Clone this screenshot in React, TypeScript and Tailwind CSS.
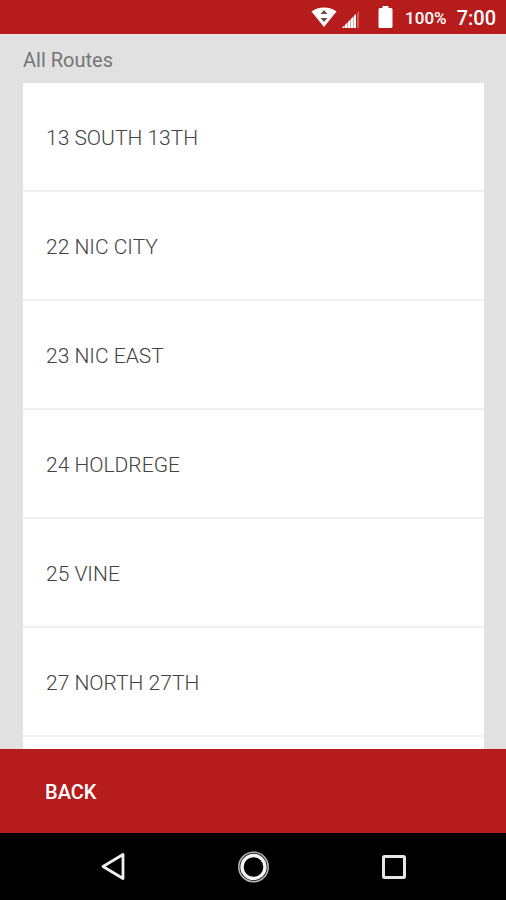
const routes = [
  "13 SOUTH 13TH",
  "22 NIC CITY",
  "23 NIC EAST",
  "24 HOLDREGE",
  "25 VINE",
  "27 NORTH 27TH",
];

function WifiIcon() {
  return (
    <svg className="w-[26px] h-5" viewBox="0 0 26 20" aria-hidden="true">
      <path d="M0.5 4.5C4 1.8 8.2 0.5 13 0.5s9 1.3 12.5 4L13 20z" fill="#fff" />
      <path d="M13 3l3.500 4h-7zM9.500 11h7L13 15z" fill="#6b4f4d" />
    </svg>
  );
}

function SignalIcon() {
  return (
    <svg className="w-[18px] h-[17px]" viewBox="0 0 18 17" aria-hidden="true">
      <path d="M0 17l2-2v2zM3 14l2-2v5H3zM6 11l2-2v8H6zM9 8l2-2v11H9zM12 5l2-2v14h-2z" fill="#fff" />
      <path d="M0 17L14 3v14z" fill="#fff" opacity="0.6" />
      <path d="M15 2l2-2v17h-2z" fill="#d05a57" />
    </svg>
  );
}

function BatteryIcon() {
  return (
    <svg className="w-[15px] h-[22px]" viewBox="0 0 15 22" aria-hidden="true">
      <path d="M4.5 0h6v2H13a1.5 1.5 0 0 1 1.500 1.500v17A1.500 1.500 0 0 1 13 22H2a1.500 1.500 0 0 1-1.500-1.500v-17A1.500 1.500 0 0 1 2 2h2.500z" fill="#fff" />
    </svg>
  );
}

function StatusBar() {
  return (
    <header className="flex h-[34px] shrink-0 items-center justify-end bg-[#b71c1c] pr-[10px] text-white">
      <WifiIcon />
      <div className="ml-[5px] pt-1">
        <SignalIcon />
      </div>
      <div className="ml-[18px]">
        <BatteryIcon />
      </div>
      <span className="ml-3 pt-0.5 text-[17px] leading-5 font-medium">100%</span>
      <span className="ml-[10px] pt-0.5 text-[20px] leading-5 font-medium">7:00</span>
    </header>
  );
}

function NavigationBar() {
  return (
    <nav className="flex h-[67px] shrink-0 items-center justify-center gap-[108px] bg-black">
      <button type="button" aria-label="Back">
        <svg className="size-8" viewBox="0 0 32 32" fill="none" stroke="#f0f0f0" strokeWidth="2.800" strokeLinejoin="round">
          <path d="M26 3.500v24L6 15.500z" />
        </svg>
      </button>
      <button type="button" aria-label="Home">
        <svg className="size-8" viewBox="0 0 32 32" fill="none">
          <circle cx="16.500" cy="16" r="14.700" stroke="#b4b4b4" strokeWidth="1.600" />
          <circle cx="16.500" cy="16" r="11.500" stroke="#f4f4f4" strokeWidth="3.400" />
        </svg>
      </button>
      <button type="button" aria-label="Recent apps">
        <svg className="size-8" viewBox="0 0 32 32" fill="none" stroke="#e6e6e6" strokeWidth="3">
          <rect x="6.500" y="5.500" width="21" height="21" rx="1" />
        </svg>
      </button>
    </nav>
  );
}

export default function App() {
  return (
    <div className="flex h-screen flex-col overflow-hidden bg-[#e1e1e1] font-['Roboto',sans-serif]">
      <StatusBar />

      <main className="flex min-h-0 flex-1 flex-col overflow-hidden pr-[22px] pl-[23px]">
        <h1 className="shrink-0 pt-[14px] pb-[11px] text-[20px] leading-6 text-[#757575]">
          All Routes
        </h1>
        <ul className="bg-white">
          {routes.map((route) => (
            <li key={route} className="border-b-2 border-[#f0f0f0]">
              <button
                type="button"
                className="block h-[107px] w-full px-[23px] pt-0.5 text-left text-[21px] leading-6 font-light text-[#424242]"
              >
                {route}
              </button>
            </li>
          ))}
          <li className="h-[107px]" />
        </ul>
      </main>

      <footer className="h-[84px] shrink-0 bg-[#b71c1c]">
        <button
          type="button"
          className="h-full w-full px-[45px] pt-0.5 text-left text-[20px] leading-6 font-medium text-white"
        >
          BACK
        </button>
      </footer>

      <NavigationBar />
    </div>
  );
}
